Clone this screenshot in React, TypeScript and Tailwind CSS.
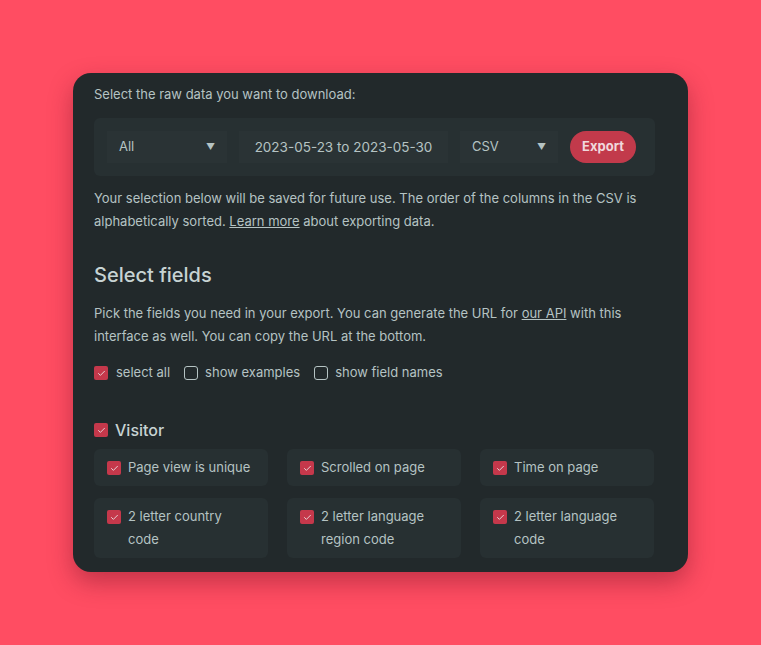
import { Check } from 'lucide-react';

const fields = [
  'Page view is unique',
  'Scrolled on page',
  'Time on page',
  '2 letter country code',
  '2 letter language region code',
  '2 letter language code',
];

function Box({ checked }: { checked: boolean }) {
  if (!checked) {
    return <span className="w-[14px] h-[14px] shrink-0 rounded-[3px] border border-[#b5c3c3]" />;
  }
  return (
    <span className="w-[14px] h-[14px] shrink-0 rounded-[2px] bg-[#c5384b] flex items-center justify-center">
      <Check className="w-[9px] h-[9px] text-[#e8d7da]" strokeWidth={2.5} />
    </span>
  );
}

function Select({ label, width }: { label: string; width: string }) {
  return (
    <div className={`${width} h-8 shrink-0 bg-[#2a3335] flex items-center justify-between pl-3 pr-[12px]`}>
      <span>{label}</span>
      <span className="text-[9px] text-[#b5c3c3]">▼</span>
    </div>
  );
}

export default function App() {
  return (
    <div
      className="w-[761px] h-[645px] bg-[#ff4d62] pt-[73px] pl-[73px] text-[#b5c3c3] text-[13px]"
      style={{ fontFamily: 'Inter, "DejaVu Sans", sans-serif' }}
    >
      <div className="w-[615px] h-[499px] bg-[#22292b] rounded-[18px] shadow-[0_10px_25px_rgba(120,20,40,0.45)] overflow-hidden px-[21px] pt-[10px]">
        <p className="leading-[23px]">Select the raw data you want to download:</p>

        <div className="mt-[12px] w-[561px] h-[58px] bg-[#273032] rounded-md flex items-center gap-3 pl-[13px]">
          <Select label="All" width="w-[120px]" />
          <div className="w-[209px] h-8 shrink-0 bg-[#2a3335] flex items-center justify-center text-[13.5px]">
            2023-05-23 to 2023-05-30
          </div>
          <Select label="CSV" width="w-[98px]" />
          <button className="w-[66px] h-8 shrink-0 rounded-full bg-[#c23a4b] text-[#f0d8dc] font-bold text-[13px]">
            Export
          </button>
        </div>

        <p className="mt-[11px] leading-[23px]">
          Your selection below will be saved for future use. The order of the columns in the CSV is
          alphabetically sorted. <span className="underline">Learn more</span> about exporting data.
        </p>

        <h2 className="mt-[29px] text-[20px] leading-[26px] font-medium text-[#c7d3d3]">Select fields</h2>

        <p className="mt-[14px] leading-[23px]">
          Pick the fields you need in your export. You can generate the URL for{' '}
          <span className="underline">our API</span> with this interface as well. You can copy the URL at
          the bottom.
        </p>

        <div className="mt-[15px] flex items-center gap-[14px] h-[20px]">
          <label className="flex items-center gap-[8px]">
            <Box checked />
            select all
          </label>
          <label className="flex items-center gap-[7px]">
            <Box checked={false} />
            show examples
          </label>
          <label className="flex items-center gap-[7px]">
            <Box checked={false} />
            show field names
          </label>
        </div>

        <div className="mt-[37px] flex items-center gap-[7px] h-[20px] text-[16px] font-medium text-[#c7d3d3]">
          <Box checked />
          Visitor
        </div>

        <div className="mt-[9px] grid grid-cols-3 gap-x-[19px] gap-y-[12px] w-[560px]">
          {fields.map((f) => (
            <div key={f} className="bg-[#273032] rounded-md flex items-start gap-[7px] pl-[13px] pr-3 py-[7px]">
              <span className="mt-[5px]">
                <Box checked />
              </span>
              <span className="leading-[23px]">{f}</span>
            </div>
          ))}
        </div>
      </div>
    </div>
  );
}
